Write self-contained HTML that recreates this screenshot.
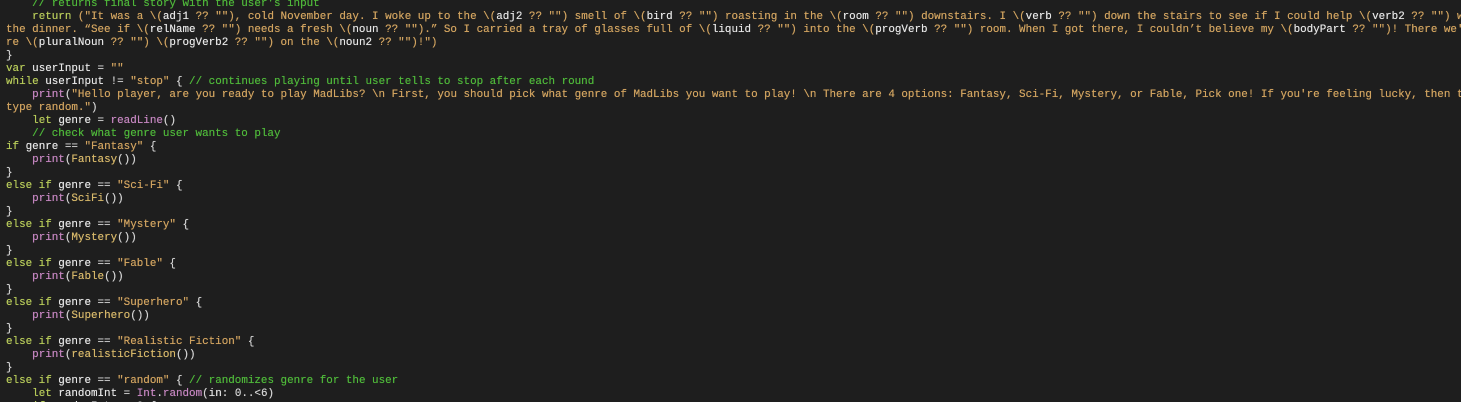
<!DOCTYPE html>
<html><head><meta charset="utf-8"><style>
html,body{margin:0;padding:0;background:#fff;}
#c{position:absolute;left:0;top:0;width:1461px;height:402px;background:#1e1e1e;overflow:hidden;}
pre{margin:0;position:absolute;left:6px;top:-2px;font-family:"Liberation Mono",monospace;font-size:10.9px;line-height:13px;color:#d4d4d4;white-space:pre;text-shadow:0 0 0.4px currentColor;}
.k{color:#b8cc5a}.c{color:#4fb83a}.s{color:#d2a460}.p{color:#c586c0}.f{color:#d7b86a}.i{color:#e6e6e6}
</style></head><body><div id="c"><pre><span class="c">    // returns final story with the user's input</span>
    <span class="k">return</span> <span class="s">("It was a \(</span><span class="i">adj1</span><span class="s"> ?? ""), cold November day. I woke up to the \(</span><span class="i">adj2</span><span class="s"> ?? "") smell of \(</span><span class="i">bird</span><span class="s"> ?? "") roasting in the \(</span><span class="i">room</span><span class="s"> ?? "") downstairs. I \(</span><span class="i">verb</span><span class="s"> ?? "") down the stairs to see if I could help \(</span><span class="i">verb2</span><span class="s"> ?? "") with</span>
<span class="s">the dinner. “See if \(</span><span class="i">relName</span><span class="s"> ?? "") needs a fresh \(</span><span class="i">noun</span><span class="s"> ?? "").” So I carried a tray of glasses full of \(</span><span class="i">liquid</span><span class="s"> ?? "") into the \(</span><span class="i">progVerb</span><span class="s"> ?? "") room. When I got there, I couldn’t believe my \(</span><span class="i">bodyPart</span><span class="s"> ?? "")! There we'</span>
<span class="s">re \(</span><span class="i">pluralNoun</span><span class="s"> ?? "") \(</span><span class="i">progVerb2</span><span class="s"> ?? "") on the \(</span><span class="i">noun2</span><span class="s"> ?? "")!")</span>
}
<span class="k">var</span> <span class="i">userInput</span> = <span class="s">""</span>
<span class="k">while</span> <span class="i">userInput</span> != <span class="s">"stop"</span> { <span class="c">// continues playing until user tells to stop after each round</span>
    <span class="p">print</span>(<span class="s">"Hello player, are you ready to play MadLibs? \n First, you should pick what genre of MadLibs you want to play! \n There are 4 options: Fantasy, Sci-Fi, Mystery, or Fable, Pick one! If you're feeling lucky, then type</span>
<span class="s">type random."</span>)
    <span class="k">let</span> <span class="i">genre</span> = <span class="p">readLine</span>()
    <span class="c">// check what genre user wants to play</span>
<span class="k">if</span> <span class="i">genre</span> == <span class="s">"Fantasy"</span> {
    <span class="p">print</span>(<span class="f">Fantasy</span>())
}
<span class="k">else if</span> <span class="i">genre</span> == <span class="s">"Sci-Fi"</span> {
    <span class="p">print</span>(<span class="f">SciFi</span>())
}
<span class="k">else if</span> <span class="i">genre</span> == <span class="s">"Mystery"</span> {
    <span class="p">print</span>(<span class="f">Mystery</span>())
}
<span class="k">else if</span> <span class="i">genre</span> == <span class="s">"Fable"</span> {
    <span class="p">print</span>(<span class="f">Fable</span>())
}
<span class="k">else if</span> <span class="i">genre</span> == <span class="s">"Superhero"</span> {
    <span class="p">print</span>(<span class="f">Superhero</span>())
}
<span class="k">else if</span> <span class="i">genre</span> == <span class="s">"Realistic Fiction"</span> {
    <span class="p">print</span>(<span class="f">realisticFiction</span>())
}
<span class="k">else if</span> <span class="i">genre</span> == <span class="s">"random"</span> { <span class="c">// randomizes genre for the user</span>
    <span class="k">let</span> <span class="i">randomInt</span> = <span class="p">Int</span>.<span class="p">random</span>(<span class="i">in</span>: 0..&lt;6)
    <span class="k">if</span> <span class="i">randomInt</span> == 0 {
</pre></div></body></html>
